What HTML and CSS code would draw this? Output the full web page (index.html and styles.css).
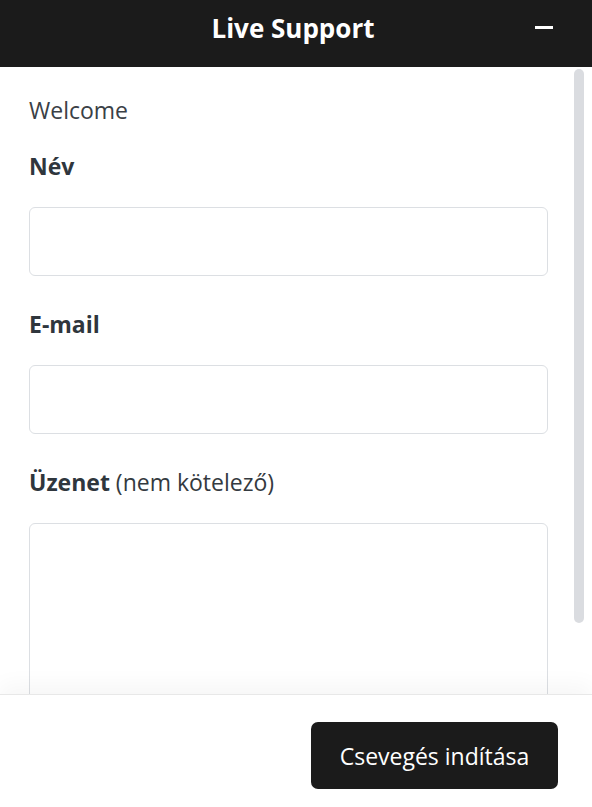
FILE: index.html
```html
<!DOCTYPE html>
<html lang="hu">
<head>
<meta charset="utf-8">
<title>Live Support</title>
<link rel="stylesheet" href="styles.css">
</head>
<body>
<div class="widget">
  <header class="topbar">
    <span class="spacer"></span>
    <h1 class="title">Live Support</h1>
    <button class="minimize" aria-label="Minimize">
      <svg width="18" height="3" viewBox="0 0 18 3"><rect x="0" y="0" width="18" height="3" fill="#ffffff"/></svg>
    </button>
  </header>
  <main class="body">
    <form class="form">
      <p class="welcome">Welcome</p>
      <label class="label" for="name">Név</label>
      <input class="field" id="name" type="text">
      <label class="label" for="email">E-mail</label>
      <input class="field" id="email" type="email">
      <label class="label" for="msg">Üzenet <span class="optional">(nem kötelező)</span></label>
      <textarea class="field area" id="msg"></textarea>
    </form>
    <div class="scroll-thumb"></div>
  </main>
  <footer class="footer">
    <button class="start" type="button">Csevegés indítása</button>
  </footer>
</div>
</body>
</html>
```
FILE: styles.css
```css
* { box-sizing: border-box; }
html, body { margin: 0; padding: 0; height: 100%; }
body {
  font-family: "Open Sans", "Noto Sans", "Liberation Sans", sans-serif;
  background: #ffffff;
  color: #343a40;
}
.widget {
  display: flex;
  flex-direction: column;
  height: 100vh;
  overflow: hidden;
}
.topbar {
  height: 67px;
  flex: 0 0 67px;
  background: #1b1b1b;
  display: grid;
  grid-template-columns: 1fr auto 1fr;
  align-items: center;
}
.title {
  margin: 0 0 0 -6px;
  color: #ffffff;
  font-size: 26px;
  font-weight: 700;
  line-height: 34px;
  padding-bottom: 12px;
}
.minimize {
  justify-self: end;
  margin-right: 39px;
  background: none;
  border: 0;
  padding: 0;
  display: flex;
  margin-bottom: 13px;
}
.body {
  flex: 1 1 auto;
  position: relative;
  overflow: hidden;
}
.form {
  padding: 27px 44px 0 29px;
  display: flex;
  flex-direction: column;
}
.welcome {
  margin: 0 0 24px;
  font-size: 23px;
  line-height: 32px;
  color: #3a4046;
}
.label {
  font-size: 23px;
  font-weight: 700;
  line-height: 32px;
  color: #2f363d;
  margin-bottom: 25px;
}
.optional { font-weight: 400; color: #343a40; }
.field {
  display: block;
  width: 100%;
  height: 69px;
  border: 1px solid #dcdfe3;
  border-radius: 6px;
  background: #ffffff;
  margin: 0 0 32px;
  font: inherit;
}
.area { height: 200px; resize: none; }
.scroll-thumb {
  position: absolute;
  top: 2px;
  right: 8px;
  width: 10px;
  height: 554px;
  border-radius: 5px;
  background: #dadce0;
}
.footer {
  flex: 0 0 113px;
  border-top: 1px solid #e8e8e8;
  box-shadow: 0 -10px 20px rgba(0, 0, 0, 0.035);
  background: #ffffff;
  display: flex;
  justify-content: flex-end;
  align-items: flex-start;
  padding: 27px 34px 0 0;
  position: relative;
}
.start {
  width: 247px;
  height: 67px;
  background: #1b1b1b;
  color: #ffffff;
  border: 0;
  border-radius: 7px;
  font-family: inherit;
  font-size: 23px;
  font-weight: 400;
  padding: 0;
}
```
